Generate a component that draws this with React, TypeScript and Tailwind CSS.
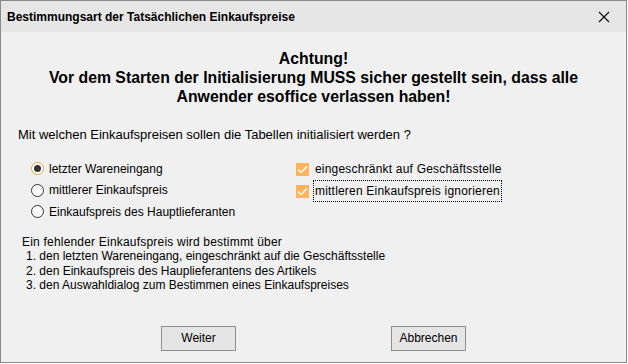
import React from "react";

const arial = { fontFamily: '"Liberation Sans", Arial, sans-serif' };

function Radio({ checked, label }: { checked?: boolean; label: string }) {
  return (
    <div className="flex items-center h-[21.5px]">
      <span
        className={
          "w-[13px] h-[13px] rounded-full border flex items-center justify-center bg-white " +
          (checked ? "border-[#e8a53a]" : "border-[#333333]")
        }
      >
        {checked && <span className="w-[7px] h-[7px] rounded-full bg-[#333333]" />}
      </span>
      <span className="ml-[5px]">{label}</span>
    </div>
  );
}

function Check({ label, focus }: { label: string; focus?: boolean }) {
  return (
    <div className="flex items-center h-[22px]">
      <span className="w-[13px] h-[13px] bg-[#fcb55d] flex items-center justify-center">
        <svg width="11" height="9" viewBox="0 0 11 9">
          <path d="M1 4.5 L4 7.5 L10 1.5" stroke="white" strokeWidth="1.3" fill="none" />
        </svg>
      </span>
      <span
        className={
          "ml-[4px] px-[1px] py-[1px] tracking-[0.2px] " +
          (focus ? "border border-dotted border-black" : "border border-transparent")
        }
      >
        {label}
      </span>
    </div>
  );
}

export default function App() {
  return (
    <div
      className="w-[627px] h-[363px] border border-[#8a8a8a] bg-[#f0f0f0] flex flex-col text-[12px] text-black overflow-hidden"
      style={arial}
    >
      {/* Titelleiste */}
      <div className="h-[31px] shrink-0 bg-[#e6e6e6] flex items-center justify-between pl-[6px] pr-[16px]">
        <span className="text-[12px] font-bold">
          Bestimmungsart der Tatsächlichen Einkaufspreise
        </span>
        <svg width="12" height="12" viewBox="0 0 12 12">
          <path d="M1 1 L11 11 M11 1 L1 11" stroke="#111" strokeWidth="1.2" />
        </svg>
      </div>

      <div className="flex flex-col pt-[17px]">
        <div className="text-center text-[15.8px] font-bold leading-[19px]">
          <div>Achtung!</div>
          <div>Vor dem Starten der Initialisierung MUSS sicher gestellt sein, dass alle</div>
          <div>Anwender esoffice verlassen haben!</div>
        </div>

        <div className="mt-[21px] pl-[17px] text-[13px] leading-[16px]">
          Mit welchen Einkaufspreisen sollen die Tabellen initialisiert werden ?
        </div>

        <div className="mt-[15px] flex">
          <div className="pl-[30px] w-[295px]">
            <Radio checked label="letzter Wareneingang" />
            <Radio label="mittlerer Einkaufspreis" />
            <Radio label="Einkaufspreis des Hauptlieferanten" />
          </div>
          <div>
            <Check label="eingeschränkt auf Geschäftsstelle" />
            <Check label="mittleren Einkaufspreis ignorieren" focus />
          </div>
        </div>

        <div className="mt-[12px] pl-[21px] leading-[14.5px]">
          <div className="tracking-[0.2px]">Ein fehlender Einkaufspreis wird bestimmt über</div>
          <div className="pl-[4px]">1. den letzten Wareneingang, eingeschränkt auf die Geschäftsstelle</div>
          <div className="pl-[4px]">2. den Einkaufspreis des Hauplieferantens des Artikels</div>
          <div className="pl-[4px]">3. den Auswahldialog zum Bestimmen eines Einkaufspreises</div>
        </div>

        <div className="mt-[33px] flex pl-[160px] gap-[155px]">
          <button className="w-[75px] h-[25px] bg-[#e5e5e5] border border-[#8f8f8f]">Weiter</button>
          <button className="w-[75px] h-[25px] bg-[#e5e5e5] border border-[#8f8f8f]">Abbrechen</button>
        </div>
      </div>
    </div>
  );
}
